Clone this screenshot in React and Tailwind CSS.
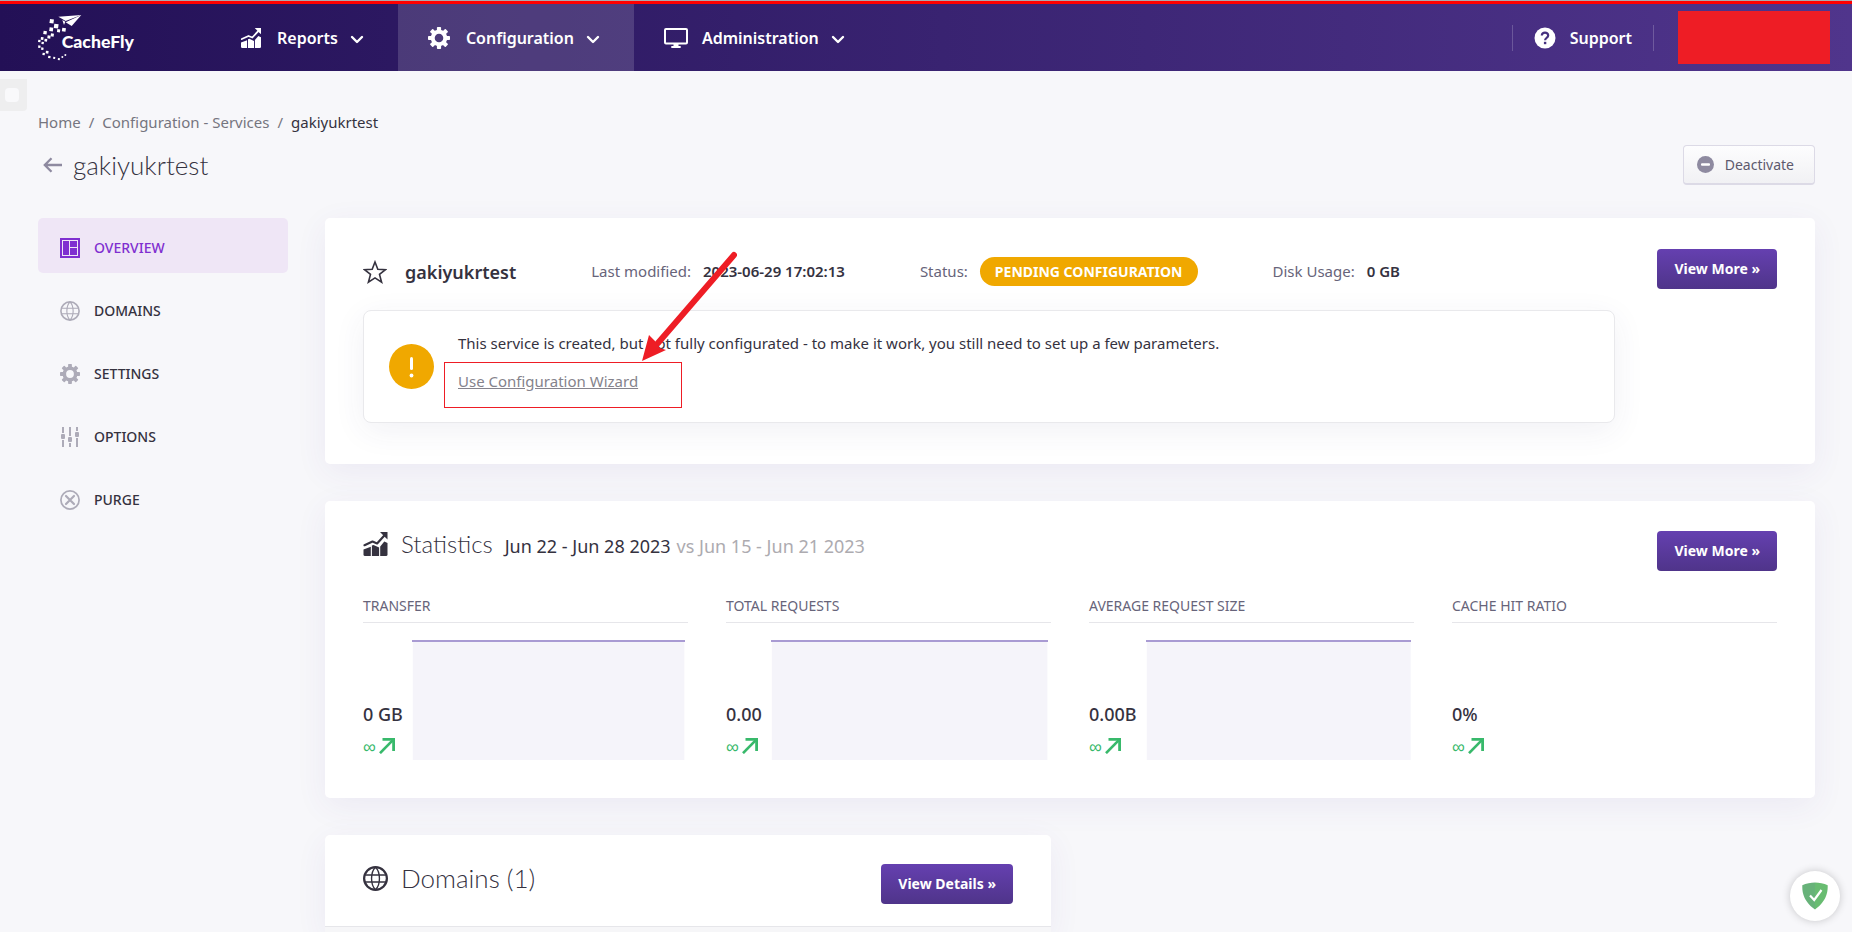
const LOGO_SQUARES = [
  [150, 54, 12], [163, 68, 13], [149, 79, 11], [172, 84, 9], [187, 80, 11], [131, 89, 10],
  [153, 97, 9], [143, 103, 9], [123, 108, 8], [134, 113, 8], [115, 116, 7], [125, 122, 7],
  [115, 133, 7], [124, 139, 7], [138, 149, 8], [128, 155, 7], [145, 164, 7], [160, 167, 6],
  [174, 171, 6], [185, 165, 5], [194, 159, 5],
];

function Logo() {
  return (
    <svg viewBox="102 24 312 162" className="h-[54px] w-[104px]" role="img" aria-label="CacheFly">
      <g fill="#fff">
        {LOGO_SQUARES.map(([x, y, s]) => (
          <rect key={x + '-' + y} x={x} y={y} width={s} height={s} transform={`rotate(8 ${x} ${y})`} />
        ))}
        <path d="M175 47 244 42 197 60 187 54Z" />
        <path d="M187 57 196 62 192 72Z" />
        <path d="M244 42 215 75 197 64Z" />
        <text x="185" y="142" fontFamily="Lato, sans-serif" fontWeight="900" fontSize="53">CacheFly</text>
      </g>
    </svg>
  );
}

function StatsIcon({ className }) {
  return (
    <svg viewBox="0 0 24 24" className={className} aria-hidden="true">
      <g fill="currentColor">
        <path d="M0 17.500 7.300 14.800V24H1.500A1.500 1.500 0 0 1 0 22.500Z" />
        <path d="M8.400 13.500 10 12.900 15.600 15.500V24H8.400Z" />
        <path d="M16.700 14.500 20.800 9.500 24 11V22.500A1.500 1.500 0 0 1 22.500 24H16.700Z" />
        <path d="M16.500 0H24V7.500L21.400 5Z" />
      </g>
      <path d="M1 13.200 9 9.600 13.600 11.400 21.500 2.800" fill="none" stroke="currentColor" strokeWidth="2.200" strokeLinejoin="round" strokeLinecap="round" />
    </svg>
  );
}

function Gear({ className }) {
  return (
    <svg viewBox="0 0 20 20" className={className} aria-hidden="true">
      <circle cx="10" cy="10" r="5.7" fill="none" stroke="currentColor" strokeWidth="3.6" />
      {[0, 45, 90, 135, 180, 225, 270, 315].map((a) => (
        <rect key={a} x="8.1" y="0" width="3.8" height="4" rx="0.7" fill="currentColor" transform={`rotate(${a} 10 10)`} />
      ))}
    </svg>
  );
}

function Monitor({ className }) {
  return (
    <svg viewBox="0 0 24 20" className={className} aria-hidden="true">
      <rect x="1" y="1" width="22" height="14.5" rx="1" fill="none" stroke="currentColor" strokeWidth="2" />
      <path d="M9.500 16h5v2h2.200v2H7.300v-2h2.200Z" fill="currentColor" />
    </svg>
  );
}

function Globe({ className, heavy }) {
  return (
    <svg viewBox="0 0 20 20" className={className} fill="none" stroke="currentColor" aria-hidden="true">
      <circle cx="10" cy="10" r="9.1" strokeWidth={heavy ? 1.8 : 1.6} />
      <path d="M1.500 7.200H18.500M1.500 12.800H18.500M10 1C5.800 5 5.800 15 10 19M10 1C14.200 5 14.200 15 10 19" strokeWidth="1.100" />
    </svg>
  );
}

function Overview({ className }) {
  return (
    <svg viewBox="0 0 20 20" className={className} aria-hidden="true">
      <rect x="1" y="1" width="18" height="18" fill="none" stroke="currentColor" strokeWidth="2" />
      <path d="M3 3h6v14H3ZM10 3h7v6h-7ZM10 10h7v7h-7Z" fill="currentColor" />
    </svg>
  );
}

function Sliders({ className }) {
  return (
    <svg viewBox="0 0 20 20" className={className} fill="currentColor" aria-hidden="true">
      <path d="M2 0h2v6H2ZM2 13h2v7H2ZM9 0h2v9H9ZM9 16h2v4H9ZM16 0h2v4h-2ZM16 11h2v9h-2Z" />
      <rect x="1" y="7" width="4" height="5" rx="1" />
      <rect x="8" y="10" width="4" height="5" rx="1" />
      <rect x="15" y="5" width="4" height="5" rx="1" />
    </svg>
  );
}

function CrossCircle({ className }) {
  return (
    <svg viewBox="0 0 20 20" className={className} fill="none" stroke="currentColor" aria-hidden="true">
      <circle cx="10" cy="10" r="9.1" strokeWidth="1.700" />
      <path d="M6 6 14 14M14 6 6 14" strokeWidth="2.200" strokeLinecap="round" />
    </svg>
  );
}

function Chevron() {
  return (
    <svg viewBox="0 0 14 9" className="mt-[3px] ml-3 h-[9px] w-[14px]" fill="none" stroke="currentColor" strokeWidth="2.400" strokeLinecap="round" strokeLinejoin="round" aria-hidden="true">
      <path d="M2 2 7 7 12 2" />
    </svg>
  );
}

function UpRight() {
  return (
    <svg viewBox="0 0 16 16" className="size-4" fill="none" stroke="currentColor" strokeWidth="2.600" aria-hidden="true">
      <path d="M1 15.200 13.600 2.400" />
      <path d="M3.500 1.400H14.600V13" strokeWidth="2.800" />
    </svg>
  );
}

function NavItem({ icon, label, active }) {
  return (
    <button type="button" className={`flex items-center pr-[34px] pl-[30px] text-base font-semibold text-white ${active ? 'bg-white/15' : ''}`}>
      <span className="mr-3.5 flex w-6 shrink-0 items-center">{icon}</span>
      {label}
      <Chevron />
    </button>
  );
}

function PurpleButton({ children }) {
  return (
    <button type="button" className="h-10 shrink-0 rounded bg-linear-to-b from-[#6540b0] to-[#4f348a] px-[17px] text-sm font-bold whitespace-nowrap text-white">
      {children}
    </button>
  );
}

const SIDE_ITEMS = [
  { label: 'OVERVIEW', Icon: Overview, active: true },
  { label: 'DOMAINS', Icon: Globe },
  { label: 'SETTINGS', Icon: Gear },
  { label: 'OPTIONS', Icon: Sliders },
  { label: 'PURGE', Icon: CrossCircle },
];

const STATS = [
  { label: 'TRANSFER', value: '0 GB', chart: true },
  { label: 'TOTAL REQUESTS', value: '0.00', chart: true },
  { label: 'AVERAGE REQUEST SIZE', value: '0.00B', chart: true },
  { label: 'CACHE HIT RATIO', value: '0%', chart: false },
];

const CARD = 'bg-white shadow-[0_8px_32px_rgba(80,60,160,0.07)]';

function Meta({ label, children }) {
  return (
    <div className="flex items-center whitespace-nowrap">
      <span className="mr-3 text-[#67647a]">{label}</span>
      {children}
    </div>
  );
}

export default function App() {
  return (
    <div className="relative min-h-screen overflow-hidden bg-[#f7f7fa] font-['Noto_Sans',sans-serif] text-[15px] text-[#35323f]">
      <div className="h-px bg-[#a9a9ae]" />
      <header className="flex h-[70px] items-stretch border-t-3 border-[#ff0000] bg-linear-to-r from-[#231056] to-[#50358c] pb-1 pl-[34px]">
        <a href="#home" className="mr-[71px] flex items-center">
          <Logo />
        </a>
        <nav className="-mb-1 flex items-stretch">
          <NavItem icon={<StatsIcon className="h-5 w-6" />} label="Reports" />
          <NavItem icon={<Gear className="size-[22px]" />} label="Configuration" active />
          <NavItem icon={<Monitor className="h-5 w-6" />} label="Administration" />
        </nav>
        <div className="-mb-1 ml-auto flex items-center pr-[22px]">
          <a href="#support" className="mr-6 flex h-[26px] items-center border-x border-white/20 px-[21px] text-base font-semibold text-white">
            <svg viewBox="0 0 22 22" className="mr-3.5 size-[22px]" aria-hidden="true">
              <circle cx="11" cy="11" r="10.500" fill="#fff" />
              <path d="M7.800 8.600C7.800 6.700 9.200 5.600 11 5.600s3.200 1.100 3.200 2.800c0 1.300-.8 1.900-1.700 2.600-.9.700-1.400 1.200-1.400 2.300" fill="none" stroke="#45307f" strokeWidth="2.200" />
              <rect x="9.900" y="14.800" width="2.400" height="2.400" fill="#45307f" />
            </svg>
            Support
          </a>
          <div className="h-[53px] w-[152px] bg-[#ee1d25]" />
        </div>
      </header>

      <div className="absolute top-[79px] left-0 flex h-8 w-[27px] items-center rounded-br bg-[#eeeeef] pl-[5px]">
        <div className="size-3.5 rounded-sm bg-[#f9f9fb]" />
      </div>

      <main className="pt-[39px] pr-[37px] pl-[38px]">
        <nav className="flex h-6 items-center gap-2 text-[#75757f]" aria-label="Breadcrumb">
          <a href="#home">Home</a>
          <span>/</span>
          <a href="#services">Configuration - Services</a>
          <span>/</span>
          <span className="text-[#35323f]">gakiyukrtest</span>
        </nav>

        <div className="mt-[11px] flex h-10 items-center justify-between">
          <div className="flex items-center">
            <button type="button" aria-label="Back" className="mr-[11px] ml-[5px] text-[#8e8aa0]">
              <svg viewBox="0 0 19 16" className="h-4 w-[19px]" fill="none" stroke="currentColor" strokeWidth="2.300" aria-hidden="true">
                <path d="M19 8H2M8.500 1.200 1.800 8l6.700 6.800" />
              </svg>
            </button>
            <h1 className="font-[Lato,sans-serif] text-[26px] leading-8 font-light">gakiyukrtest</h1>
          </div>
          <button type="button" className="flex h-10 items-center gap-[11px] rounded border border-b-2 border-[#dcdae6] bg-linear-to-b from-[#fdfdfe] to-[#f1f1f4] pr-5 pl-[13px] text-sm text-[#5d5a6e]">
            <svg viewBox="0 0 17 17" className="size-[17px]" aria-hidden="true">
              <circle cx="8.500" cy="8.500" r="8.500" fill="#8e8aa0" />
              <rect x="4" y="7.300" width="9" height="2.400" rx="1" fill="#fff" />
            </svg>
            Deactivate
          </button>
        </div>

        <div className="mt-[33px] flex items-start gap-[37px]">
          <aside className="w-[250px] shrink-0">
            <nav className="flex flex-col gap-2" aria-label="Service">
              {SIDE_ITEMS.map(({ label, Icon, active }) => (
                <a key={label} href={'#' + label.toLowerCase()} className={`flex h-[55px] items-center rounded-[5px] pt-1 pl-[22px] text-sm font-medium ${active ? 'bg-[#efe6f6] text-[#7f2fd0]' : ''}`}>
                  <Icon className={`mr-3.5 size-5 ${active ? '' : 'text-[#adabb8]'}`} />
                  {label}
                </a>
              ))}
            </nav>
          </aside>

          <div className="flex min-w-0 flex-1 flex-col gap-[37px]">
            <section className={`flex items-start gap-[42px] rounded-[5px] px-[38px] pt-[31px] pb-[41px] ${CARD}`}>
              <div className="min-w-0 flex-1">
                <div className="mt-2 flex h-[29px] items-center gap-[75px]">
                  <div className="flex items-center text-lg font-semibold">
                    <svg viewBox="0 0 24 24" className="mr-[18px] size-6" fill="none" stroke="currentColor" strokeWidth="1.600" strokeLinejoin="miter" aria-hidden="true">
                      <path d="M12 2 14.800 9.200 22.500 9.600 16.500 14.400 18.600 22.200 12 17.900 5.400 22.200 7.500 14.400 1.500 9.600 9.200 9.200Z" />
                    </svg>
                    gakiyukrtest
                  </div>
                  <Meta label="Last modified:"><span className="font-semibold">2023-06-29 17:02:13</span></Meta>
                  <Meta label="Status:">
                    <span className="flex h-[29px] items-center rounded-full bg-[#f0a800] px-[15px] text-sm font-bold text-white">PENDING CONFIGURATION</span>
                  </Meta>
                  <Meta label="Disk Usage:"><span className="font-semibold">0 GB</span></Meta>
                </div>

                <div className="mt-6 flex items-center rounded-lg border border-[#e9e9ec] bg-white pt-5 pr-6 pb-[29px] pl-[25px] shadow-[0_8px_32px_rgba(60,50,110,0.07)]">
                  <svg viewBox="0 0 45 45" className="mt-2 mr-6 size-[45px] shrink-0" aria-hidden="true">
                    <circle cx="22.500" cy="22.500" r="22.500" fill="#f0a800" />
                    <path d="M22.500 14.500V24.500" stroke="#fff" strokeWidth="3" strokeLinecap="round" />
                    <circle cx="22.500" cy="31.500" r="1.900" fill="#fff" />
                  </svg>
                  <div className="flex flex-col items-start gap-3.5">
                    <p className="leading-6">This service is created, but not fully configurated - to make it work, you still need to set up a few parameters.</p>
                    <div className="relative">
                      <a href="#wizard" className="block leading-6 text-[#85838c] underline">Use Configuration Wizard</a>
                      <div className="pointer-events-none absolute -top-[7px] -left-3.5 h-[46px] w-[238px] border border-[#ee1d25]" />
                      <svg viewBox="0 0 96 112" className="pointer-events-none absolute -top-[119px] left-[183px] h-28 w-24" aria-hidden="true">
                        <path d="M93 5 17 93" stroke="#ee1d25" strokeWidth="6" strokeLinecap="round" />
                        <path d="M1 111 8 85 14 91 19 98 25 100Z" fill="#ee1d25" />
                      </svg>
                    </div>
                  </div>
                </div>
              </div>
              <PurpleButton>View More »</PurpleButton>
            </section>

            <section className={`rounded-[5px] px-[38px] pt-[30px] pb-[38px] ${CARD}`}>
              <div className="flex h-10 items-center justify-between">
                <div className="-mt-3.5 flex items-center">
                  <StatsIcon className="mr-[13px] h-6 w-[25px]" />
                  <div className="flex items-baseline">
                    <h2 className="mr-3 font-[Lato,sans-serif] text-2xl font-light">Statistics</h2>
                    <span className="mr-1.5 text-lg">Jun 22 - Jun 28 2023</span>
                    <span className="text-lg text-[#adabb0]">vs Jun 15 - Jun 21 2023</span>
                  </div>
                </div>
                <PurpleButton>View More »</PurpleButton>
              </div>
              <div className="mt-[25px] grid grid-cols-4 gap-[38px]">
                {STATS.map((s) => (
                  <div key={s.label}>
                    <h3 className="border-b border-[#e6e6ea] pb-1.5 text-sm text-[#67647a]">{s.label}</h3>
                    <div className="mt-[17px] flex h-[120px] items-end gap-[9px] pr-[3px]">
                      <div className="pb-0.5">
                        <div className="text-lg leading-6 font-medium">{s.value}</div>
                        <div className="mt-2 flex h-6 items-center gap-[3px] text-lg font-medium text-[#38b96b]">∞<UpRight /></div>
                      </div>
                      {s.chart && (
                        <svg viewBox="0 0 100 120" preserveAspectRatio="none" className="h-full min-w-0 flex-1" aria-hidden="true">
                          <rect x="0.300" y="0" width="99.400" height="120" fill="#f5f4fa" />
                          <rect x="0" y="0" width="100" height="2" fill="#a99bd3" />
                        </svg>
                      )}
                    </div>
                  </div>
                ))}
              </div>
            </section>

            <section className={`w-[calc(50%-19px)] rounded-t-[5px] ${CARD}`}>
              <div className="flex items-center justify-between border-b border-[#e6e6ea] px-[38px] pt-[29px] pb-[22px]">
                <div className="-mt-3 flex items-center">
                  <Globe heavy className="mr-[13px] size-[25px]" />
                  <h2 className="font-[Lato,sans-serif] text-[26px] leading-8 font-light">Domains (1)</h2>
                </div>
                <PurpleButton>View Details »</PurpleButton>
              </div>
              <div className="h-[5px] bg-[#f6f6f8]" />
            </section>
          </div>
        </div>
      </main>

      <button type="button" aria-label="Protection status" className="fixed right-3 bottom-[11px] flex size-[50px] items-center justify-center rounded-full bg-white shadow-[0_0_8px_rgba(0,0,0,0.2)]">
        <svg viewBox="0 0 26 28" className="h-7 w-[26px]" aria-hidden="true">
          <path d="M13 .5C9 .5 4 1.400.300 3.300.300 7.500-.2 18 13 27.500Z" fill="#67b279" />
          <path d="M13 .5c4 0 9 .9 12.700 2.800C25.700 7.500 26.200 18 13 27.500Z" fill="#68bc71" />
          <path d="M8 13.500 12.200 18 19.500 8" fill="none" stroke="#fff" strokeWidth="2.200" />
        </svg>
      </button>
    </div>
  );
}
